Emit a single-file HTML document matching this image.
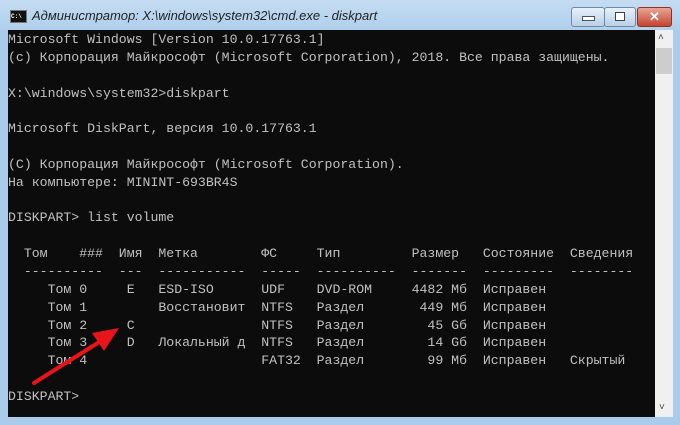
<!DOCTYPE html><html><head><meta charset="utf-8"><style>
body{margin:0;width:680px;height:425px;overflow:hidden;background:#aacbea;position:relative;font-family:"Liberation Sans",sans-serif}
#title{position:absolute;left:0;top:0;width:680px;height:30px;background:linear-gradient(#c4dcf2,#b0cfec)}
#t{position:absolute;left:32px;top:8px;font-size:13px;font-style:italic;color:#222}
#ico{position:absolute;left:10px;top:10px;width:15px;height:11px;background:#111;border:1px solid #777;color:#fff;font:bold 6px "Liberation Mono";line-height:11px}
.b{position:absolute;top:7px;height:18px;border:1px solid #6f8aa8;border-radius:3px;background:linear-gradient(#e8f1fa,#b9cfe6)}
#con{position:absolute;left:8px;top:30px;width:647px;height:387px;background:#0c0c0c}
pre{margin:0;position:absolute;left:8px;top:31px;font:13.2px/17.85px "Liberation Mono","DejaVu Sans Mono",monospace;color:#c0c0c0}
#sb{position:absolute;left:655px;top:30px;width:18px;height:387px;background:#f0f0f0}
</style></head><body>
<div id="title"></div><div id="ico">C:\</div>
<div id="t">Администратор: X:\windows\system32\cmd.exe - diskpart</div>
<div class="b" style="left:571px;width:32px"><div style="position:absolute;left:10px;top:8px;width:11px;height:3px;background:#fff;border:1px solid #456"></div></div>
<div class="b" style="left:604px;width:30px"><div style="position:absolute;left:10px;top:4px;width:8px;height:7px;border:1px solid #345;background:#fff"></div></div>
<div class="b" style="left:637px;width:33px;background:linear-gradient(#e9a596,#c4442e);border-color:#8a3426;color:#fff;text-align:center;font:bold 13px/18px 'Liberation Sans'">✕</div>
<div id="con"></div>
<div id="sb"><div style="position:absolute;left:3px;top:2px;font-size:10px;color:#444">˄</div><div style="position:absolute;left:1px;top:18px;width:16px;height:26px;background:#cdcdcd"></div><div style="position:absolute;left:4px;bottom:4px;font-size:10px;color:#444">˅</div></div>
<pre>Microsoft Windows [Version 10.0.17763.1]
(c) Корпорация Майкрософт (Microsoft Corporation), 2018. Все права защищены.

X:\windows\system32&gt;diskpart

Microsoft DiskPart, версия 10.0.17763.1

(C) Корпорация Майкрософт (Microsoft Corporation).
На компьютере: MININT-693BR4S

DISKPART&gt; list volume

  Том    ###  Имя  Метка        ФС     Тип         Размер   Состояние  Сведения
  ----------  ---  -----------  -----  ----------  -------  ---------  --------
     Том 0     E   ESD-ISO      UDF    DVD-ROM     4482 Мб  Исправен
     Том 1         Восстановит  NTFS   Раздел       449 Мб  Исправен
     Том 2     C                NTFS   Раздел        45 Gб  Исправен
     Том 3     D   Локальный д  NTFS   Раздел        14 Gб  Исправен
     Том 4                      FAT32  Раздел        99 Мб  Исправен   Скрытый

DISKPART&gt;</pre>
<svg style="position:absolute;left:0;top:0" width="680" height="425"><line x1="34" y1="383" x2="104" y2="339" stroke="#e8141a" stroke-width="4" stroke-linecap="round"/><polygon points="119,328 92,333 104,351" fill="#e8141a"/></svg>
</body></html>
